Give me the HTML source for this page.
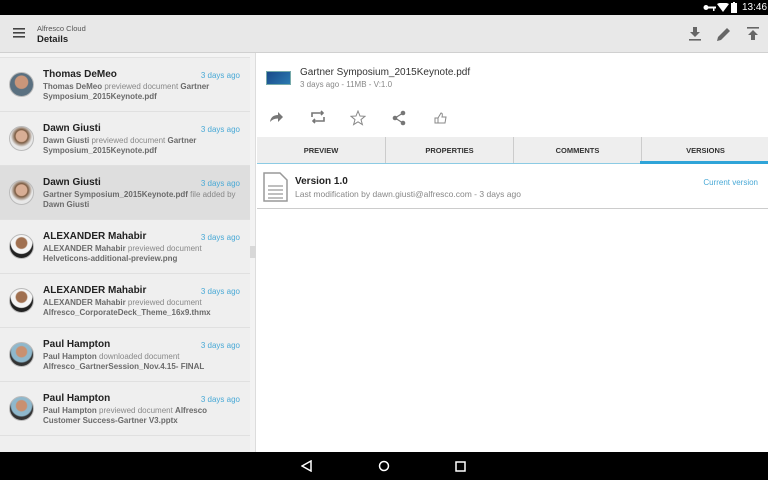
<!DOCTYPE html>
<html><head><meta charset="utf-8"><style>
*{margin:0;padding:0;box-sizing:border-box}
body{width:768px;height:480px;overflow:hidden;font-family:"Liberation Sans",sans-serif;background:#fff;position:relative}
.sb{position:absolute;left:0;top:0;width:768px;height:15px;background:#000;color:#fff;font-size:10px}
.tb{position:absolute;left:0;top:15px;width:768px;height:38px;background:#e8e8e8;border-bottom:1px solid #d0d0d0}
.left{position:absolute;left:0;top:53px;width:250px;height:399px;background:#efefef;overflow:hidden}
.gut{position:absolute;left:250px;top:53px;width:6px;height:399px;background:#f3f3f3;border-right:1px solid #ddd}
.item{position:absolute;left:0;width:250px;height:54px;border-bottom:1px solid #e0e0e0}
.item .av{position:absolute;left:9px;top:14px;width:25px;height:25px;border-radius:50%;border:1px solid #bbb;overflow:hidden}
.item .nm{position:absolute;left:43px;top:11px;font-size:10px;font-weight:bold;color:#222}
.item .tm{position:absolute;right:10px;top:13px;font-size:8px;color:#49a9d6}
.item .ds{position:absolute;left:43px;top:24px;width:200px;font-size:8px;line-height:10px;color:#888}
.item .ds b{color:#6a6a6a}
.nav{position:absolute;left:0;top:452px;width:768px;height:28px;background:#000}
.tab{position:absolute;top:137px;height:27px;width:128px;background:#eeeeee;font-size:7.5px;font-weight:bold;text-align:center;line-height:27px;color:#333}
</style></head><body>
<div class="sb">
<svg style="position:absolute;left:703px;top:3px" width="14" height="9"><circle cx="3" cy="4.5" r="2.5" fill="#fff"/><rect x="5" y="3.5" width="8" height="2" fill="#fff"/><rect x="10" y="5" width="1.5" height="3" fill="#fff"/></svg>
<svg style="position:absolute;left:717px;top:3px" width="12" height="9"><path d="M0 1 Q6 -2 12 1 L6 9Z" fill="#fff"/></svg>
<svg style="position:absolute;left:731px;top:2px" width="6" height="11"><rect x="0" y="1" width="6" height="10" fill="#fff"/><rect x="2" y="0" width="2" height="1" fill="#fff"/></svg>
<span style="position:absolute;left:742px;top:2px">13:46</span>
</div>
<div class="tb">
<svg style="position:absolute;left:13px;top:13px" width="12" height="10"><rect y="0" width="12" height="1.6" fill="#444"/><rect y="4" width="12" height="1.6" fill="#444"/><rect y="8" width="12" height="1.6" fill="#444"/></svg>
<div style="position:absolute;left:37px;top:9px;font-size:7.5px;color:#555">Alfresco Cloud</div>
<div style="position:absolute;left:37px;top:19px;font-size:9.5px;font-weight:bold;color:#222">Details</div>
<svg style="position:absolute;left:688px;top:12px" width="14" height="14"><path d="M5 0h4v5h3l-5 5-5-5h3z" fill="#666"/><rect x="1" y="12" width="12" height="1.6" fill="#666"/></svg>
<svg style="position:absolute;left:716px;top:11px" width="16" height="16"><path d="M1 15l1-4 9-9 3 3-9 9z" fill="#666"/></svg>
<svg style="position:absolute;left:746px;top:12px" width="14" height="14"><rect x="1" y="0" width="12" height="1.6" fill="#666"/><path d="M5 13h4V8h3L7 3 2 8h3z" fill="#666"/></svg>
</div>
<div class="left">
<div style="position:absolute;top:0;left:0;width:250px;height:5px;background:#f4f4f4;border-bottom:1px solid #e2e2e2"></div>
<div class="item" style="top:5px"><div class="av" style="background:radial-gradient(circle at 50% 40%,#c9967a 35%,#5a7080 40%)"></div><div class="nm">Thomas DeMeo</div><div class="tm">3 days ago</div><div class="ds"><b>Thomas DeMeo</b> previewed document <b>Gartner Symposium_2015Keynote.pdf</b></div></div>
<div class="item" style="top:59px"><div class="av" style="background:radial-gradient(circle at 50% 40%,#d8ae95 30%,#7a5a40 36%,#e8e8e8 60%)"></div><div class="nm">Dawn Giusti</div><div class="tm">3 days ago</div><div class="ds"><b>Dawn Giusti</b> previewed document <b>Gartner Symposium_2015Keynote.pdf</b></div></div>
<div class="item" style="top:113px;background:#dedede"><div class="av" style="background:radial-gradient(circle at 50% 40%,#d8ae95 30%,#7a5a40 36%,#e8e8e8 60%)"></div><div class="nm">Dawn Giusti</div><div class="tm">3 days ago</div><div class="ds"><b>Gartner Symposium_2015Keynote.pdf</b> file added by <b>Dawn Giusti</b></div></div>
<div class="item" style="top:167px"><div class="av" style="background:radial-gradient(circle at 50% 35%,#a07050 28%,#f4f4f4 34%,#f4f4f4 55%,#222 60%)"></div><div class="nm">ALEXANDER Mahabir</div><div class="tm">3 days ago</div><div class="ds"><b>ALEXANDER Mahabir</b> previewed document <b>Helveticons-additional-preview.png</b></div></div>
<div class="item" style="top:221px"><div class="av" style="background:radial-gradient(circle at 50% 35%,#a07050 28%,#f4f4f4 34%,#f4f4f4 55%,#222 60%)"></div><div class="nm">ALEXANDER Mahabir</div><div class="tm">3 days ago</div><div class="ds"><b>ALEXANDER Mahabir</b> previewed document <b>Alfresco_CorporateDeck_Theme_16x9.thmx</b></div></div>
<div class="item" style="top:275px"><div class="av" style="background:radial-gradient(circle at 50% 38%,#c99070 28%,#8fb8cc 34%,#8fb8cc 55%,#333 62%)"></div><div class="nm">Paul Hampton</div><div class="tm">3 days ago</div><div class="ds"><b>Paul Hampton</b> downloaded document <b>Alfresco_GartnerSession_Nov.4.15- FINAL</b></div></div>
<div class="item" style="top:329px"><div class="av" style="background:radial-gradient(circle at 50% 38%,#c99070 28%,#8fb8cc 34%,#8fb8cc 55%,#333 62%)"></div><div class="nm">Paul Hampton</div><div class="tm">3 days ago</div><div class="ds"><b>Paul Hampton</b> previewed document <b>Alfresco<br>Customer Success-Gartner V3.pptx</b></div></div>
</div>
<div class="gut"><div style="position:absolute;left:0;top:193px;width:6px;height:12px;background:#d8d8d8"></div></div>
<div style="position:absolute;left:266px;top:71px;width:25px;height:14px;background:linear-gradient(135deg,#1a4a8a,#2a7ab0);border:1px solid #7aa"></div>
<div style="position:absolute;left:300px;top:67px;font-size:10px;color:#333">Gartner Symposium_2015Keynote.pdf</div>
<div style="position:absolute;left:300px;top:80px;font-size:8px;color:#888">3 days ago - 11MB - V:1.0</div>
<svg style="position:absolute;left:270px;top:111px" width="14" height="12"><path d="M0 11 Q1 4 8 4V1l5 5-5 5V7.5Q3 7.5 0 11z" fill="#777"/></svg>
<svg style="position:absolute;left:310px;top:110px" width="16" height="14" fill="none" stroke="#777" stroke-width="1.6"><path d="M2 7V3h11M11 1l2 2-2 2M14 7v4H3M5 9l-2 2 2 2"/></svg>
<svg style="position:absolute;left:350px;top:110px" width="16" height="16"><path d="M8 1l2 5 5 .3-4 3.3 1.4 5L8 11.8 3.6 14.6 5 9.6 1 6.3 6 6z" fill="none" stroke="#888" stroke-width="1"/></svg>
<svg style="position:absolute;left:392px;top:110px" width="14" height="16" fill="#777"><circle cx="11" cy="3" r="2.3"/><circle cx="3" cy="8" r="2.3"/><circle cx="11" cy="13" r="2.3"/><path d="M3 8L11 3M3 8l8 5" stroke="#777" stroke-width="1.2"/></svg>
<svg style="position:absolute;left:434px;top:112px" width="13" height="12" fill="none" stroke="#888" stroke-width="1"><path d="M1 6h3v5H1zM4 6l3-5q2 0 1 4h4l-1 6H4"/></svg>
<div class="tab" style="left:257px">PREVIEW</div>
<div class="tab" style="left:385px;border-left:1px solid #ccc">PROPERTIES</div>
<div class="tab" style="left:513px;border-left:1px solid #ccc">COMMENTS</div>
<div class="tab" style="left:641px;border-left:1px solid #ccc">VERSIONS</div>
<div style="position:absolute;left:257px;top:163px;width:511px;height:1px;background:#8ccbe4"></div>
<div style="position:absolute;left:640px;top:161px;width:128px;height:3px;background:#2fa4d8"></div>
<svg style="position:absolute;left:263px;top:172px" width="26" height="30" fill="none" stroke="#999" stroke-width="1.5"><path d="M1 1h16l7 7v21H1z"/><path d="M5 14h15M5 18h15M5 22h15M5 26h15" stroke-width="1.3"/></svg>
<div style="position:absolute;left:295px;top:176px;font-size:10px;font-weight:bold;color:#222">Version 1.0</div>
<div style="position:absolute;left:295px;top:189px;font-size:8.5px;color:#888">Last modification by dawn.giusti@alfresco.com - 3 days ago</div>
<div style="position:absolute;right:10px;top:178px;font-size:8px;color:#49a9d6">Current version</div>
<div style="position:absolute;left:257px;top:208px;width:511px;height:1px;background:#ccc"></div>
<div class="nav">
<svg style="position:absolute;left:301px;top:8px" width="12" height="12"><path d="M10 1v10L1 6z" fill="none" stroke="#fff" stroke-width="1.5"/></svg>
<svg style="position:absolute;left:378px;top:8px" width="12" height="12"><circle cx="6" cy="6" r="4.5" fill="none" stroke="#fff" stroke-width="1.5"/></svg>
<svg style="position:absolute;left:455px;top:9px" width="11" height="11"><rect x="1" y="1" width="9" height="9" fill="none" stroke="#fff" stroke-width="1.5"/></svg>
</div>
</body></html>
